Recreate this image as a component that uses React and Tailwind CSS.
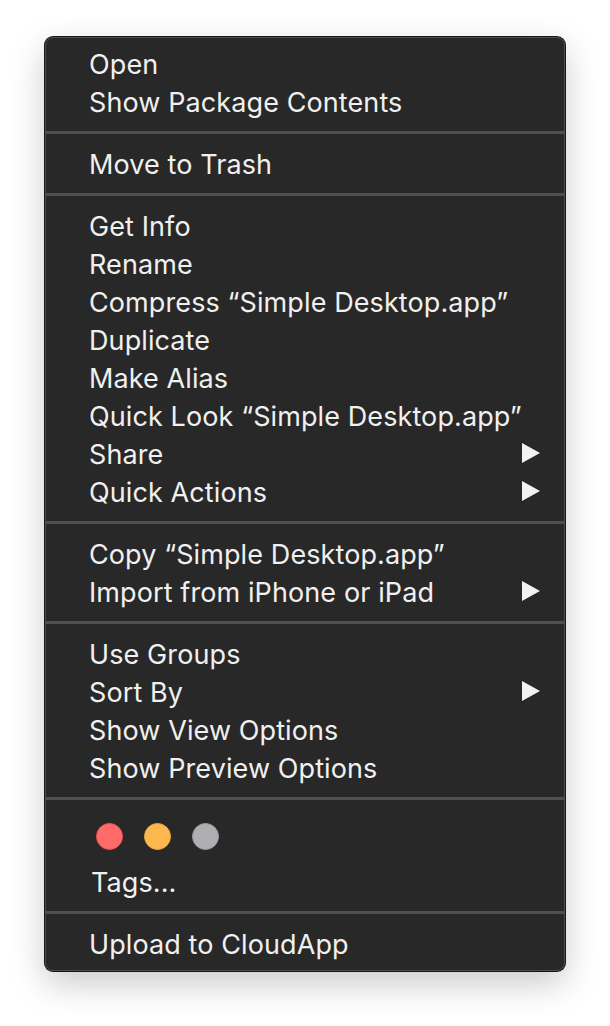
import React from "react";

const Arrow = () => (
  <svg width="18" height="20" viewBox="0 0 18 20" className="block">
    <polygon points="0,0 18,10 0,20" fill="#f2f2f2" />
  </svg>
);

const Item = ({ label, sub }) => (
  <div className="flex h-[38px] items-center pl-[43px] pr-[24px]">
    <span className="flex-1 translate-y-[2px] whitespace-nowrap">{label}</span>
    {sub && <Arrow />}
  </div>
);

const Sep = () => (
  <div className="flex h-[24px] items-center">
    <div className="h-[3px] w-full bg-[#4f4f4f]" />
  </div>
);

const Dot = ({ fill, ring }) => (
  <div
    className="h-[27px] w-[27px] rounded-full border-[1.5px]"
    style={{ backgroundColor: fill, borderColor: ring }}
  />
);

export default function App() {
  const groups = [
    [["Open"], ["Show Package Contents"]],
    [["Move to Trash"]],
    [
      ["Get Info"],
      ["Rename"],
      ["Compress “Simple Desktop.app”"],
      ["Duplicate"],
      ["Make Alias"],
      ["Quick Look “Simple Desktop.app”"],
      ["Share", true],
      ["Quick Actions", true],
    ],
    [["Copy “Simple Desktop.app”"], ["Import from iPhone or iPad", true]],
    [
      ["Use Groups"],
      ["Sort By", true],
      ["Show View Options"],
      ["Show Preview Options"],
    ],
  ];
  return (
    <div className="min-h-[1026px] w-[610px] bg-white pt-[37px] pl-[45px]">
      <div
        className="w-[520px] overflow-hidden rounded-[8px] border border-[#4d4d4d] bg-[#282828] pt-[6px] pb-[8px] text-[27px] tracking-[0.1px] text-[#f0f0f0] shadow-[0_0_0_1px_rgba(0,0,0,0.9),0_12px_34px_rgba(0,0,0,0.22)]"
        style={{ fontFamily: "Inter, 'Noto Sans', sans-serif" }}
      >
        {groups.map((g, i) => (
          <React.Fragment key={i}>
            {i > 0 && <Sep />}
            {g.map(([l, s]) => (
              <Item key={l} label={l} sub={s} />
            ))}
          </React.Fragment>
        ))}
        <Sep />
        <div className="flex h-[52px] items-center gap-[21px] pl-[50px]">
          <Dot fill="#fe6b69" ring="#f0514f" />
          <Dot fill="#fdb74f" ring="#f3a534" />
          <Dot fill="#afafb3" ring="#9b9b9f" />
        </div>
        <div className="flex h-[38px] items-center pl-[45px]">
          <span className="translate-y-[2px]">Tags...</span>
        </div>
        <Sep />
        <Item label="Upload to CloudApp" />
      </div>
    </div>
  );
}
